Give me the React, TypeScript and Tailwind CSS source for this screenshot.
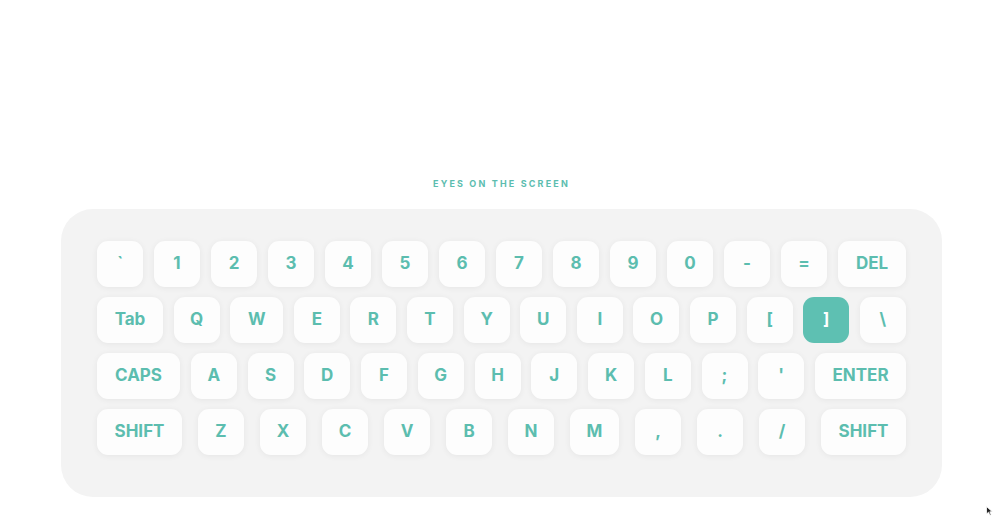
const rows: { label: string; w?: number; active?: boolean }[][] = [
  [
    { label: "`" }, { label: "1" }, { label: "2" }, { label: "3" }, { label: "4" },
    { label: "5" }, { label: "6" }, { label: "7" }, { label: "8" }, { label: "9" },
    { label: "0" }, { label: "-" }, { label: "=" }, { label: "DEL", w: 68 },
  ],
  [
    { label: "Tab", w: 66 }, { label: "Q" }, { label: "W", w: 53 }, { label: "E" },
    { label: "R" }, { label: "T" }, { label: "Y" }, { label: "U" }, { label: "I" },
    { label: "O" }, { label: "P" }, { label: "[" }, { label: "]", active: true }, { label: "\\" },
  ],
  [
    { label: "CAPS", w: 83 }, { label: "A" }, { label: "S" }, { label: "D" }, { label: "F" },
    { label: "G" }, { label: "H" }, { label: "J" }, { label: "K" }, { label: "L" },
    { label: ";" }, { label: "'" }, { label: "ENTER", w: 91 },
  ],
  [
    { label: "SHIFT", w: 85 }, { label: "Z" }, { label: "X" }, { label: "C" }, { label: "V" },
    { label: "B" }, { label: "N" }, { label: "M", w: 49 }, { label: "," }, { label: "." },
    { label: "/" }, { label: "SHIFT", w: 85 },
  ],
];

const Key = ({ label, w, active }: { label: string; w?: number; active?: boolean }) => (
  <div
    className={
      active
        ? "flex h-[46px] w-[47px] items-center justify-center rounded-[11px] bg-[#5ec0b2] text-[17px] font-bold text-white"
        : "flex h-[46px] items-center justify-center rounded-[11px] bg-[#fdfdfd] text-[17px] font-bold text-[#5cbdaf] shadow-[0_1px_6px_rgba(0,0,0,0.06)]"
    }
    style={{ width: w ?? 46 }}
  >
    {label}
  </div>
);

export default function App() {
  return (
    <div
      className="relative flex h-[520px] w-full flex-col items-center bg-white pt-[178px]"
      style={{ fontFamily: "Inter, 'Noto Sans', sans-serif" }}
    >
      <div className="pl-[3px] text-[9px] leading-[12px] font-bold tracking-[0.24em] text-[#5cbdaf]">
        EYES ON THE SCREEN
      </div>
      <div className="mt-[19px] ml-[3px] flex w-[881px] flex-col gap-[10px] rounded-[32px] bg-[#f3f3f3] px-[36px] pt-[32px] pb-[42px]">
        {rows.map((row, i) => (
          <div key={i} className="flex justify-between">
            {row.map((k, j) => (
              <Key key={j} {...k} />
            ))}
          </div>
        ))}
      </div>
      <svg className="absolute top-[506px] left-[986px]" width="7" height="10" viewBox="0 0 7 10">
        <path d="M0.5 0.5 L0.5 8 L2.5 6.2 L4 9.3 L5.2 8.8 L3.8 5.8 L6.3 5.8 Z" fill="#222" stroke="#fff" strokeWidth="0.8" />
      </svg>
    </div>
  );
}
